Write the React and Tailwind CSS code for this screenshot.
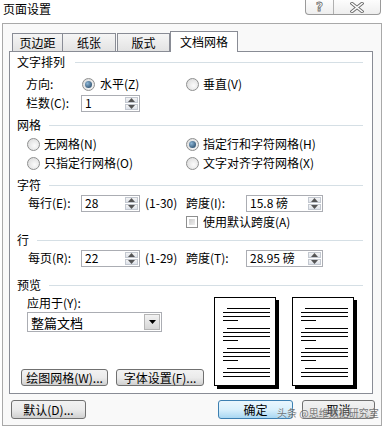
import React from "react";

const Radio = ({ checked }) => (
  <div className="w-[13px] h-[13px] rounded-full border border-[#8e8f8f] bg-[radial-gradient(circle_at_60%_60%,#fbfbfb,#d6d6d6)] flex items-center justify-center shrink-0">
    {checked && (
      <div className="w-[7px] h-[7px] rounded-full bg-[radial-gradient(circle_at_35%_35%,#8cb6d6,#1a3a58)]" />
    )}
  </div>
);

const Checkbox = () => (
  <div className="w-[12px] h-[12px] border border-[#8e8f8f] bg-white p-[2px] shrink-0">
    <div className="w-full h-full bg-gradient-to-br from-[#cbcbcb] to-[#efefef]" />
  </div>
);

const Arrow = ({ up }) => (
  <svg width="7" height="4" viewBox="0 0 7 4">
    {up ? <path d="M0 4 L3.5 0 L7 4 Z" fill="#555" /> : <path d="M0 0 L3.5 4 L7 0 Z" fill="#555" />}
  </svg>
);

const Spin = ({ value, w }) => (
  <div className={`h-[17px] ${w} border border-[#abadb3] bg-white flex items-stretch shrink-0`}>
    <div className="flex-1 flex items-center pl-[3px] whitespace-pre">{value}</div>
    <div className="w-[15px] flex flex-col p-[1px] gap-[1px]">
      <div className="flex-1 border border-[#c3c8d0] bg-gradient-to-b from-[#f4f4f4] to-[#dde2ea] flex items-center justify-center">
        <Arrow up />
      </div>
      <div className="flex-1 border border-[#c3c8d0] bg-gradient-to-b from-[#f4f4f4] to-[#dde2ea] flex items-center justify-center">
        <Arrow />
      </div>
    </div>
  </div>
);

const Group = ({ title, mt, gap }) => (
  <div className={`h-[16px] ${mt} flex items-center pl-[7px] pr-[9px]`}>
    <span>{title}</span>
    <div className={`flex-1 h-px bg-[#d5dfe5] ${gap}`} />
  </div>
);

const Btn = ({ children, w, def }) => (
  <div
    className={`${w} h-[19px] rounded-[3px] border flex items-center justify-center shrink-0 ${
      def
        ? "border-[#3c7fb1] bg-gradient-to-b from-[#eaf6fd] via-[#d9f0fc] to-[#a9d7f2]"
        : "border-[#707070] bg-gradient-to-b from-[#f2f2f2] via-[#ebebeb] to-[#d0d0d0]"
    }`}
  >
    {children}
  </div>
);

const SmallBtn = ({ children, w }) => (
  <div className={`${w} h-[17px] rounded-[3px] border border-[#707070] bg-gradient-to-b from-[#f2f2f2] via-[#ebebeb] to-[#d0d0d0] flex items-center justify-center shrink-0`}>
    {children}
  </div>
);

const Para = ({ last }) => (
  <div className="flex flex-col gap-[3px]">
    <div className="h-px bg-black ml-[4px]" />
    <div className="h-px bg-black" />
    <div className="h-px bg-black" />
    {!last && <div className="h-px bg-black w-[15px]" />}
  </div>
);

const Page = () => (
  <div className="w-[62px] h-[89px] border border-black bg-white shadow-[3px_3px_0_#000] pt-[10px] pl-[8px] pr-[5px] flex flex-col gap-[7px] shrink-0">
    <Para />
    <Para />
    <Para />
    <Para last />
  </div>
);

export default function App() {
  return (
    <div className="relative w-[384px] h-[430px] bg-white overflow-hidden text-[12px] leading-none text-black font-['Noto_Sans_CJK_SC','Noto_Sans',sans-serif]">
      {/* title bar */}
      <div className="h-[23px] flex items-start justify-between">
        <div className="pl-[3px] pt-[3px] text-[12px]">页面设置</div>
        <div className="mr-[3px] flex h-[15px] border border-t-0 border-[#9a9a9a] rounded-b-[4px] bg-gradient-to-b from-[#fdfdfd] to-[#eeeeee]">
          <div className="w-[28px] flex items-center justify-center border-r border-[#b0b0b0] text-white text-[12px] font-bold [-webkit-text-stroke:0.8px_#6f6f6f] font-['DejaVu_Sans',sans-serif]">
            ?
          </div>
          <div className="w-[46px] flex items-center justify-center">
            <svg width="14" height="11" viewBox="0 0 14 11">
              <path d="M2 1.5 L12 9.5 M12 1.5 L2 9.5" stroke="#6f6f6f" strokeWidth="3.4" strokeLinecap="square" />
              <path d="M2 1.5 L12 9.5 M12 1.5 L2 9.5" stroke="#ffffff" strokeWidth="1.6" strokeLinecap="square" />
            </svg>
          </div>
        </div>
      </div>

      {/* outer frame */}
      <div className="ml-[2px] w-[380px] h-[403px] border border-[#a9a9a9] bg-[#f9f9f9] pt-[7px]">
        {/* tabs */}
        <div className="h-[20px] flex items-end pl-[9px]">
          <div className="w-[51px] h-[18px] border border-b-0 border-[#898c95] bg-gradient-to-b from-[#f5f5f5] to-[#e3e3e3] flex items-center justify-center">页边距</div>
          <div className="w-[53px] h-[18px] border border-b-0 border-l-0 border-[#898c95] bg-gradient-to-b from-[#f5f5f5] to-[#e3e3e3] flex items-center justify-center">纸张</div>
          <div className="w-[53px] h-[18px] ml-[1px] border border-b-0 border-[#898c95] bg-gradient-to-b from-[#f5f5f5] to-[#e3e3e3] flex items-center justify-center">版式</div>
          <div className="relative z-10 -mb-px w-[68px] h-[21px] border border-b-0 border-[#898c95] bg-white flex items-center justify-center pb-[1px]">文档网格</div>
        </div>

        {/* panel */}
        <div className="ml-[6px] w-[364px] h-[343px] border border-[#898c95] bg-white flex flex-col">
          <Group title="文字排列" mt="mt-[2px]" gap="ml-[10px]" />
          <div className="h-[18px] mt-[5px] flex items-center pl-[16px]">
            <div className="w-[56px]">方向:</div>
            <div className="w-[104px] flex items-center gap-[5px]">
              <Radio checked />
              <span>水平(Z)</span>
            </div>
            <div className="flex items-center gap-[4px]">
              <Radio />
              <span>垂直(V)</span>
            </div>
          </div>
          <div className="h-[18px] mt-[1px] flex items-center pl-[16px]">
            <div className="w-[55px]">栏数(C):</div>
            <Spin value="1" w="w-[59px]" />
          </div>

          <Group title="网格" mt="mt-[5px]" gap="ml-[8px]" />
          <div className="h-[18px] mt-[2px] flex items-center pl-[17px]">
            <div className="w-[159px] flex items-center gap-[4px]">
              <Radio />
              <span>无网格(N)</span>
            </div>
            <div className="flex items-center gap-[4px]">
              <Radio checked />
              <span>指定行和字符网格(H)</span>
            </div>
          </div>
          <div className="h-[18px] mt-[1px] flex items-center pl-[17px]">
            <div className="w-[159px] flex items-center gap-[4px]">
              <Radio />
              <span>只指定行网格(O)</span>
            </div>
            <div className="flex items-center gap-[4px]">
              <Radio />
              <span>文字对齐字符网格(X)</span>
            </div>
          </div>

          <Group title="字符" mt="mt-[5px]" gap="ml-[8px]" />
          <div className="h-[18px] mt-[1px] flex items-center pl-[18px]">
            <div className="w-[53px]">每行(E):</div>
            <Spin value="28" w="w-[59px]" />
            <div className="w-[46px] pl-[5px]">(1-30)</div>
            <div className="w-[60px]">跨度(I):</div>
            <Spin value="15.8 磅" w="w-[77px]" />
          </div>
          <div className="h-[18px] mt-[1px] flex items-center pl-[176px] gap-[5px]">
            <Checkbox />
            <span>使用默认跨度(A)</span>
          </div>

          <Group title="行" mt="mt-[1px]" gap="ml-[8px]" />
          <div className="h-[18px] mt-[1px] flex items-center pl-[18px]">
            <div className="w-[53px]">每页(R):</div>
            <Spin value="22" w="w-[59px]" />
            <div className="w-[46px] pl-[5px]">(1-29)</div>
            <div className="w-[60px]">跨度(T):</div>
            <Spin value="28.95 磅" w="w-[77px]" />
          </div>

          <Group title="预览" mt="mt-[10px]" gap="ml-[8px]" />
          <div className="flex items-start">
            <div className="w-[204px] flex flex-col">
              <div className="h-[16px] mt-[2px] pl-[17px] flex items-center">应用于(Y):</div>
              <div className="ml-[17px] mt-[1px] w-[135px] h-[20px] border border-[#abadb3] bg-white flex items-stretch">
                <div className="flex-1 flex items-center pl-[3px] text-[13px]">整篇文档</div>
                <div className="w-[16px] m-[1px] border border-[#b5b5b5] bg-gradient-to-b from-[#f2f2f2] to-[#d6d6d6] flex items-center justify-center">
                  <svg width="7" height="4" viewBox="0 0 7 4">
                    <path d="M0 0 L3.5 4 L7 0 Z" fill="#000" />
                  </svg>
                </div>
              </div>
              <div className="mt-[37px] ml-[11px] flex items-center gap-[8px]">
                <SmallBtn w="w-[87px]">绘图网格(W)...</SmallBtn>
                <SmallBtn w="w-[88px]">字体设置(F)...</SmallBtn>
              </div>
            </div>
            <div className="mt-[4px] flex items-start gap-[16px]">
              <Page />
              <Page />
            </div>
          </div>
        </div>

        {/* bottom buttons */}
        <div className="mt-[6px] flex items-center pl-[8px]">
          <Btn w="w-[75px]">默认(D)...</Btn>
          <div className="ml-[132px]">
            <Btn w="w-[75px]" def>确定</Btn>
          </div>
          <div className="ml-[9px]">
            <Btn w="w-[73px]">取消</Btn>
          </div>
        </div>
      </div>

      {/* watermark */}
      <div className="absolute left-[277px] top-[408px] text-[10px] text-[#5a5a5a] opacity-80 [text-shadow:0_0_2px_#fff] whitespace-nowrap">
        头条 @思维数据研究室
      </div>
    </div>
  );
}
